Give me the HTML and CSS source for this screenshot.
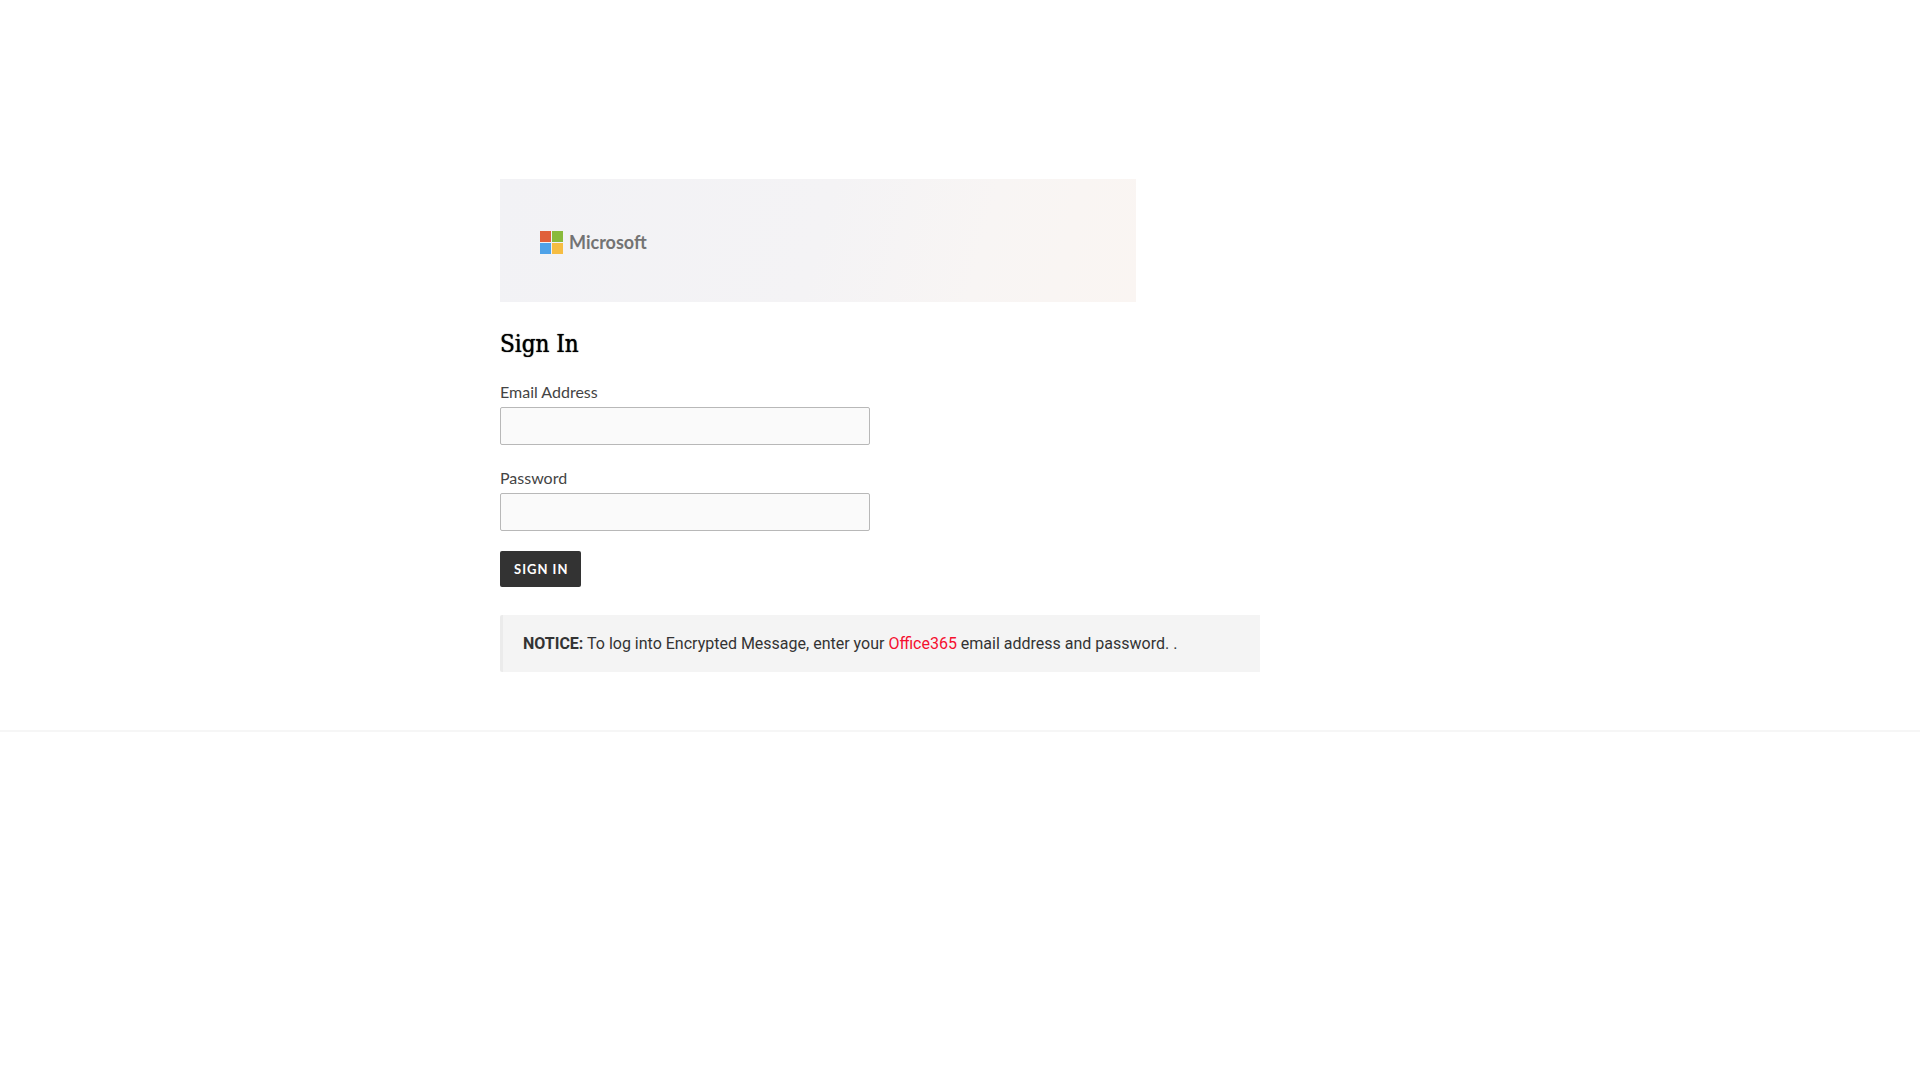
FILE: index.html
```html
<!DOCTYPE html>
<html lang="en">
<head>
<meta charset="utf-8">
<title>Sign In</title>
<link rel="stylesheet" href="styles.css">
</head>
<body>
<main class="page">
  <div class="content">
    <header class="banner">
      <svg class="logo-mark" viewBox="0 0 23 23" aria-hidden="true">
        <path fill="#e0603a" d="M0 0h11v11H0z"/>
        <path fill="#8aba3b" d="M12 0h11v11H12z"/>
        <path fill="#4ea2e8" d="M0 12h11v11H0z"/>
        <path fill="#f6bd42" d="M12 12h11v11H12z"/>
      </svg>
      <span class="logo-text">Microsoft</span>
    </header>
    <h1 class="title">Sign In</h1>
    <form class="form">
      <div class="field">
        <label class="label" for="email">Email Address</label>
        <input class="input" id="email" type="email">
      </div>
      <div class="field">
        <label class="label" for="password">Password</label>
        <input class="input" id="password" type="password">
      </div>
      <button class="button" type="submit">SIGN IN</button>
    </form>
    <p class="notice"><strong>NOTICE:</strong> To log into Encrypted Message, enter your <span class="brand">Office365</span> email address and password. .</p>
  </div>
</main>
</body>
</html>
```
FILE: styles.css
```css
* {
  box-sizing: border-box;
}

body {
  margin: 0;
  background: #fff;
  color: #333;
  font: 16px/24px Lato, sans-serif;
}

.page {
  padding: 179px 24px 58px;
  border-bottom: 2px solid #f6f6f6;
}

.content {
  display: flex;
  flex-direction: column;
  max-width: 920px;
  margin: 0 auto;
}

.banner {
  display: flex;
  align-items: center;
  gap: 6px;
  width: 100%;
  max-width: 636px;
  padding: 50px 40px 46px;
  background: linear-gradient(105deg, #f2f2f5 0%, #f4f3f5 50%, #f8f5f4 75%, #faf5f2 100%);
}

.logo-mark {
  width: 23px;
  height: 23px;
}

.logo-text {
  color: #737373;
  font: 700 18px/27px Lato, sans-serif;
}

.title {
  margin: 25px 0 18px;
  color: #000;
  font: 400 24px/34px "DejaVu Serif Condensed", "DejaVu Serif", serif;
  text-shadow: 0 0 1px #000;
}

.form {
  display: flex;
  flex-direction: column;
  align-items: flex-start;
  gap: 20px;
}

.field {
  display: flex;
  flex-direction: column;
  gap: 2px;
  width: 100%;
  max-width: 370px;
}

.label {
  color: #444;
  line-height: 26px;
}

.input {
  width: 100%;
  height: 38px;
  padding: 8px 12px;
  border: 1px solid #b8b8b8;
  border-radius: 2px;
  background: #fafafa;
  font: inherit;
}

.button {
  height: 36px;
  padding: 0 13px 0 14px;
  border: 0;
  border-radius: 2px;
  background: #333;
  color: #fff;
  font: 700 13px/36px Lato, sans-serif;
  letter-spacing: 1px;
}

.notice {
  width: 100%;
  max-width: 760px;
  margin: 28px 0 0;
  padding: 17px 20px 16px;
  border-left: 3px solid #ebebeb;
  border-radius: 2px 0 0 2px;
  background: #f4f4f4;
  font: 16px/24px Roboto, "Liberation Sans", sans-serif;
}

.brand {
  color: #f5102f;
}
```
